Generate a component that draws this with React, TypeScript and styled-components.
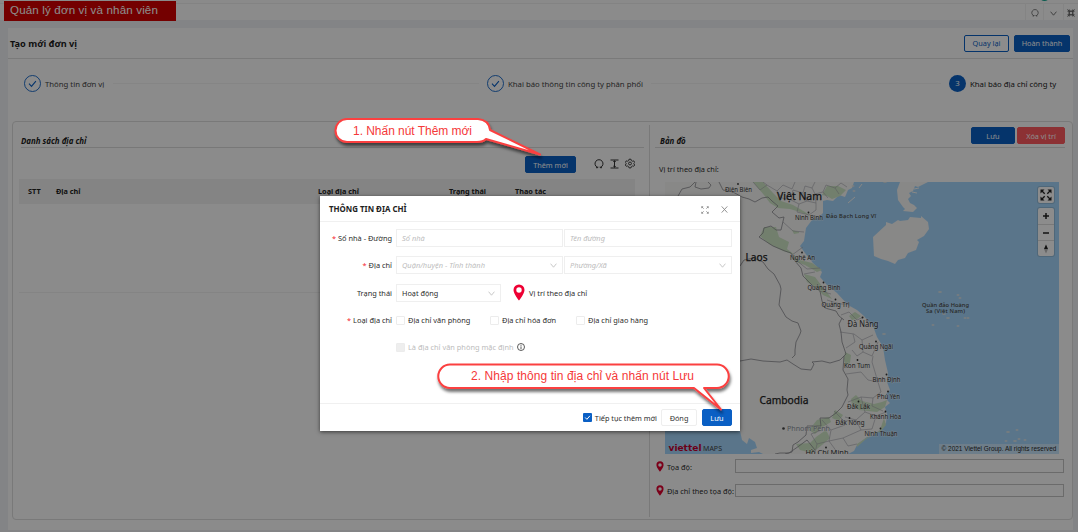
import React from "react";
import styled, { createGlobalStyle, css } from "styled-components";

const Global = createGlobalStyle`
  *, *::before, *::after { box-sizing: border-box; }
  html, body { margin: 0; padding: 0; }
  body { width: 1078px; height: 532px; overflow: hidden; font-family: "Noto Sans", "Open Sans", sans-serif; font-size: 7.4px; line-height: 10px; color: #2c2c2c; }
`;

const BLUE = "#0a5fc4";

const Screen = styled.div`
  position: relative;
  width: 1078px;
  height: 532px;
  overflow: hidden;
  background: #eff1f4;
  display: flex;
  flex-direction: column;
`;

const TopBar = styled.header`
  position: relative;
  height: 20px;
  flex: none;
  background: #fdfdfd;
  border-top: 3px solid #fbfbfb;
  display: flex;
  justify-content: space-between;
  box-shadow: inset 0 1px 0 #efefef;
`;

const Banner = styled.h1`
  position: absolute;
  left: 4px;
  top: -2px;
  width: 172px;
  height: 20px;
  margin: 0;
  padding-left: 6px;
  background: #d40000;
  color: #fff;
  font: 400 11.6px/18px "Liberation Sans", Arial, sans-serif;
  white-space: nowrap;
  letter-spacing: 0.14px;
`;

const Avatar = styled.span`
  position: absolute;
  left: 1039px;
  top: -13px;
  width: 11px;
  height: 11px;
  border-radius: 50%;
  background: #10a78f;
`;

const TabTools = styled.div`
  margin-left: auto;
  display: flex;
  height: 17px;
`;

const TabTool = styled.span<{ $w: number }>`
  width: ${(p) => p.$w}px;
  border-left: 1px solid #f0f0f0;
  display: flex;
  align-items: center;
  justify-content: center;
  padding-top: 3px;
  color: #666;
  svg { display: block; flex: none; }
`;

const Page = styled.main`
  margin: 8px 5px 0 8px;
  height: 502px;
  background: #fefefe;
  display: flex;
  flex-direction: column;
`;

const PageHeader = styled.div`
  height: 31px;
  flex: none;
  border-bottom: 1px solid #dfdfdf;
  padding: 0 3px 0 2px;
  display: flex;
  align-items: center;
  gap: 5px;
`;

const PageTitle = styled.h2`
  margin: 2px auto 0 0;
  font-size: 9.2px;
  line-height: 12px;
  font-weight: 700;
  color: #1c1c1c;
`;

const Button = styled.button<{ $w: number; $kind?: "primary" | "outline" | "danger" | "plain" }>`
  width: ${(p) => p.$w}px;
  height: 17px;
  padding: 0;
  border-radius: 2px;
  font: 400 7.3px/10px "Noto Sans", sans-serif;
  white-space: nowrap;
  flex: none;
  ${(p) =>
    p.$kind === "outline"
      ? css`background: #fff; color: ${BLUE}; border: 1px solid ${BLUE};`
      : p.$kind === "danger"
      ? css`background: #ff5a5f; color: #fff; border: 1px solid #ff5a5f;`
      : p.$kind === "plain"
      ? css`background: #fff; color: #333; border: 1px solid #eee;`
      : css`background: ${BLUE}; color: #fff; border: 1px solid ${BLUE};`}
`;

const Steps = styled.div`
  height: 62px;
  flex: none;
  padding: 16px 17px 0 16px;
  display: flex;
  align-items: flex-start;
`;

const Step = styled.div`
  display: flex;
  align-items: center;
  gap: 4px;
  height: 17px;
  flex: none;
  white-space: nowrap;
  color: #444;
  svg { display: block; flex: none; }
`;

const StepText = styled.span<{ $w: number; $dark?: boolean }>`
  width: ${(p) => p.$w}px;
  padding-top: 1px;
  font-size: 7.75px;
  color: ${(p) => (p.$dark ? "#222" : "#444")};
`;

const StepDot = styled.span`
  width: 17px;
  height: 17px;
  border-radius: 50%;
  background: ${BLUE};
  color: #fff;
  text-align: center;
  font-size: 7.8px;
  line-height: 17px;
`;

const StepLine = styled.i<{ $w?: number }>`
  flex: ${(p) => (p.$w ? `0 0 ${p.$w}px` : "1")};
  height: 1px;
  margin: 8px 8px 0 8px;
  background: #f2f2f2;
`;

const Box = styled.section`
  margin: 0 0 0 4px;
  height: 399px;
  border: 1px solid #dcdcdc;
  border-radius: 4px;
  display: flex;
`;

const ListPane = styled.div`
  width: 637px;
  margin: 3px 0 2px;
  padding: 0 5px 0 6px;
  border-right: 1px solid #dcdcdc;
`;

const MapPane = styled.div`
  flex: 1;
  padding: 3px 7px 0 5px;
`;

const PaneHead = styled.div<{ $inset: number }>`
  height: 23px;
  margin-left: ${(p) => p.$inset}px;
  border-bottom: 1px solid #dadada;
  display: flex;
  align-items: flex-start;
  gap: 2px;
  padding-top: 2px;
`;

const PaneTitle = styled.h3<{ $x?: number }>`
  margin: 9px auto 0 ${(p) => p.$x ?? 0}px;
  font-size: 7.9px;
  line-height: 10px;
  font-style: italic;
  font-weight: 700;
  color: #1c1c1c;
`;

const Toolbar = styled.div`
  height: 31px;
  padding: 8px 8px 0 0;
  display: flex;
  justify-content: flex-end;
  align-items: flex-start;
`;

const ToolIcons = styled.div`
  margin: -1px 1px 0 15px;
  height: 17px;
  padding-left: 3px;
  display: flex;
  align-items: center;
  gap: 5px;
  color: #333;
  svg { display: block; }
`;

const TableHead = styled.div`
  width: 616px;
  height: 25px;
  background: #f0f0f0;
  display: flex;
  align-items: center;
  font-weight: 700;
  font-size: 7.3px;
  color: #222;
  padding: 0 0 1px 9px;
`;

const Cell = styled.span<{ $w: number }>`
  width: ${(p) => p.$w}px;
`;

const TableBody = styled.div`
  width: 616px;
  height: 89px;
  border-bottom: 1px solid #f0f0f0;
`;

const MapLabel = styled.div`
  margin: 16px 0 8px 4px;
  font-size: 7.35px;
  line-height: 10px;
`;

const MapFrame = styled.div`
  position: relative;
  margin-left: 10px;
  width: 394px;
  height: 272px;
  svg { display: block; }
`;

const MapButtons = styled.div<{ $top: number }>`
  position: absolute;
  left: 373px;
  top: ${(p) => p.$top}px;
  width: 16px;
  background: #fff;
  border-radius: 2px;
  box-shadow: 0 0 0 1px rgba(0, 0, 0, 0.12);
`;

const MapButton = styled.span`
  height: 16px;
  display: flex;
  align-items: center;
  justify-content: center;
  & + & { border-top: 1px solid #ddd; }
`;

const Copyright = styled.div`
  position: absolute;
  right: 0;
  bottom: 0;
  width: 120px;
  height: 10px;
  background: rgba(255, 255, 255, 0.4);
  color: #2a2a2a;
  text-align: center;
  font: 400 6.45px/10px "Liberation Sans", Arial, sans-serif;
  white-space: nowrap;
`;

const CoordRow = styled.label<{ $top: number; $h: number }>`
  margin-top: ${(p) => p.$top}px;
  padding-left: 1px;
  height: ${(p) => p.$h}px;
  display: flex;
  align-items: center;
  svg { display: block; flex: none; }
  span { width: 71px; padding: 1px 0 0 3px; white-space: nowrap; font-size: 7.35px; }
  input { width: 329px; flex: none; height: 100%; border: 1px solid #c4c4c4; background: transparent; padding: 0; border-radius: 0; }
`;

const Mask = styled.div`
  position: absolute;
  inset: 0;
  background: rgba(0, 0, 0, 0.45);
`;

const Modal = styled.div`
  position: absolute;
  left: 320px;
  top: 196px;
  width: 420px;
  height: 235px;
  background: #fff;
  box-shadow: 0 1px 4px rgba(0, 0, 0, 0.6);
  display: flex;
  flex-direction: column;
`;

const ModalHead = styled.div`
  height: 26px;
  flex: none;
  border-bottom: 1px solid #f0f0f0;
  display: flex;
  align-items: center;
  gap: 12px;
  padding: 2px 12px 0 9px;
  color: #888;
  h4 { margin: -1px auto 0 0; font-size: 7.9px; line-height: 10px; font-weight: 700; color: #222; }
  svg { display: block; }
`;

const Form = styled.div`
  flex: 1;
  padding: 7px 8px 0 0;
`;

const Row = styled.div<{ $h: number }>`
  height: ${(p) => p.$h}px;
  display: flex;
  align-items: flex-start;
`;

const Label = styled.span`
  width: 76px;
  flex: none;
  padding: 4px 4px 0 0;
  text-align: right;
  white-space: nowrap;
  em { color: #f5222d; font-style: normal; margin-right: 2px; }
`;

const Field = styled.div<{ $w: number; $value?: boolean }>`
  width: ${(p) => p.$w}px;
  flex: none;
  height: 18px;
  border: 1px solid #efefef;
  padding: 0 5px;
  display: flex;
  align-items: center;
  justify-content: space-between;
  font-style: ${(p) => (p.$value ? "normal" : "italic")};
  color: ${(p) => (p.$value ? "#2c2c2c" : "#bdbdbd")};
  font-size: ${(p) => (p.$value ? 7.3 : 7.45)}px;
  & + & { margin-left: 1px; }
  svg { display: block; }
`;

const Located = styled.div`
  display: flex;
  align-items: center;
  gap: 4px;
  margin-left: 12px;
  height: 17px;
  white-space: nowrap;
  svg { display: block; }
`;

const Check = styled.span<{ $w?: number; $off?: boolean }>`
  width: ${(p) => (p.$w ? p.$w + "px" : "auto")};
  height: 18px;
  display: flex;
  align-items: center;
  gap: 3px;
  white-space: nowrap;
  color: ${(p) => (p.$off ? "#bcbcbc" : "#2c2c2c")};
  svg { display: block; color: #333; }
`;

const Tick = styled.i<{ $off?: boolean }>`
  width: 9px;
  height: 9px;
  flex: none;
  border: 1px solid #ececec;
  border-radius: 1px;
  background: ${(p) => (p.$off ? "#eee" : "#fff")};
`;

const ModalFoot = styled.div`
  height: 28px;
  flex: none;
  border-top: 1px solid #f0f0f0;
  display: flex;
  align-items: center;
  justify-content: flex-end;
  gap: 4px;
  padding-right: 8px;
  font-size: 7.3px;
  button:last-child { margin-left: 1px; }
`;

const Callouts = styled.svg`
  position: absolute;
  inset: 0;
`;

const Pin = ({ w, h, color }: { w: number; h: number; color: string }) => (
  <svg width={w} height={h} viewBox="0 0 12 17">
    <path fillRule="evenodd" fill={color} d="M6 .5A5.500 5.500 0 0 0 .5 6c0 4 5.500 10.500 5.500 10.500S11.500 10 11.500 6A5.500 5.500 0 0 0 6 .5ZM6 3.300a2.700 2.700 0 1 1 0 5.400 2.700 2.700 0 0 1 0-5.400Z" />
  </svg>
);

const Chevron = ({ c = "#bbb" }: { c?: string }) => (
  <svg width="7" height="5" viewBox="0 0 7 5">
    <path d="M.6.7 3.500 4.200 6.400.7" fill="none" stroke={c} strokeWidth=".8" />
  </svg>
);

const Reload = ({ s }: { s: number }) => (
  <svg width={s} height={s} viewBox="0 0 10 10">
    <path d="M2 8.700H3.800V7.600M3.500 8.400A4 4 0 1 1 6.500 8.400M6.200 7.600V8.700H8" fill="none" stroke="currentColor" strokeWidth="1" />
  </svg>
);

const StepCheck = () => (
  <svg width="17" height="17" viewBox="0 0 17 17">
    <circle cx="8.500" cy="8.500" r="8" fill="none" stroke={BLUE} strokeWidth=".9" />
    <path d="m5 8.600 2.500 2.700 4.400-5.200" fill="none" stroke={BLUE} strokeWidth="1.100" />
  </svg>
);

const Gear = () => (
  <svg width="10" height="11" viewBox="0 0 11 11" fill="none" stroke="currentColor" strokeWidth="1">
    <path d="M4.400.8h2.200l.4 1.500 1.300.7 1.400-.4 1 1.900-1 1v0l1 1.900-1 1.100-1.400-.3L7 9l-.4 1.300H4.400L4 9l-1.300-.8-1.400.3-1-1.100 1-1.900-1-1 1-1.900 1.400.4L4 2.300Z" />
    <circle cx="5.500" cy="5.500" r="1.600" />
  </svg>
);

type Place = [string, number, number, number, number, number, number];
/* name, centre x, baseline y, font size, width, marker x, marker y */
const places: Place[] = [
  ["Điện Biên", 73.500, 9.500, 6.800, 27, 73, 2],
  ["Ninh Bình", 144, 38, 6.800, 28, 143.500, 30.500],
  ["Nghệ An", 137.500, 78, 6.800, 25, 137, 70.500],
  ["Quảng Bình", 159, 108, 6.800, 33, 158.500, 100.500],
  ["Quảng Trị", 170.500, 124.500, 6.800, 28, 170.500, 117.500],
  ["Đà Nẵng", 198, 145, 8.200, 31, 197.500, 135.500],
  ["Quảng Ngãi", 211, 166.500, 6.800, 34, 211, 159.500],
  ["Kon Tum", 192, 185.500, 6.800, 26, 192.500, 178],
  ["Bình Định", 221.500, 200, 6.800, 28, 221.500, 192.500],
  ["Phú Yên", 223.500, 216.500, 6.800, 23, 223, 209.500],
  ["Đắk Lắk", 193.500, 226.500, 6.800, 23, 193.500, 219.500],
  ["Khánh Hòa", 220.500, 237, 6.800, 31, 220.500, 229.500],
  ["Đắk Nông", 185, 243, 6.800, 29, 184.500, 236],
  ["Ninh Thuận", 216, 254, 6.800, 33, 215.500, 246.500],
];

const islands = [
  [275, 110], [293, 113], [295, 116], [279, 132], [303, 136], [300, 136], [283, 136], [268, 143], [293, 144], [343, 250],
  [352, 248], [341, 259], [350, 259], [354, 257], [360, 258], [219, 152], [189, 9], [188, 4], [220, 0],
];

const MapArt = () => (
  <svg width="394" height="272" viewBox="0 0 394 272" fontFamily='"Noto Sans", sans-serif'>
    <rect width="394" height="272" fill="#a5d6fb" />
    <path
      fill="#f7f7f6"
      d="M0 0H189L187 6 183 8 180 15 174 13 168 19 162 18 158 19 158 31 153 36 147 38 141 46 139 59 135 64 140 71 148 81 152 85 157 90 155 95 162 103 172 111 183 123 192 128 199 134 203 139 208 144 212 155 218 165 220 178 223 191 222 200 225 208 221 212 222 218 225 221 220 225 222 232 221 241 215 248 207 254 202 255 192 263 189 269 183 272H98L94 270 86 271 86 268 92 266 90 260 84 256 82 262 77 258 75 249H0Z"
    />
    <path
      fill="#f7f7f6"
      d="M208 55 221 43 221 40 227 42 233 38 235 39 243 38 245 35 256 36 256 34 263 40 264 47 259 54 252 58 254 60 251 68 243 71 240 76 233 78 230 82 223 79 216 77 209 74ZM235 0 232 8 233 18 238 25 240 27 238 29 248 30 252 26 249 23 245 21 243 17 246 14 244 11 248 9 250 4 253 5 257 3 263 0Z"
    />
    <path fill="none" stroke="#f7f7f6" d="M247 10 252 11M249 7 254 6M183 21 190 15M194 6 197 2" />
    {islands.map(([x, y], i) => (
      <ellipse key={i} cx={x} cy={y} rx={i % 3 ? 1.500 : 2} ry=".8" fill="#e9e8e2" />
    ))}
    <g fill="#cfe8c6">
      <path d="M88 0h10l10 11 8 8 12 4 12 7 5 4-10-4-10-3-12-1-8-5-6-8Z" />
      <path d="m95 54 4-9 12 0 3 10 10 5-2 7 8 6-12-4-14-7Z" />
      <path d="m127 48 7 2 0 1-5 1ZM127 73l8 5 12 3 10 7-5 2-12-7-9-3ZM139 92l11 3 6 8 5 6 6 8-9-4-8-8-8-5Z" />
      <path d="M184 134l6-4 6 4-4 3-5 1ZM180 170l6 3-1 8-5 3-1-7ZM186 217l5-4 6 6 12 3 8-2 5-2-2 7-8 5-18-2-7-5ZM170 228l8 5-4 6-7-3ZM131 262l14-1 6-6 10-7 4 8-8 7-10 8-12-3ZM192 262l9-6 8-3 6-5 4-12 2 7-5 6-15 8-9 8Z" />
      <path d="M162 4l-5 9 5 1 5 3 8-3 6-6-8-4ZM152 238l12-3 2 5-10 6-6 6-6-4Z" />
    </g>
    <g fill="none" stroke="#a6a6ac" strokeWidth=".6">
      <path d="M88 0 95 8 102 3 112 9 118 3 127 7 130 0M102 3 98 0M112 9 117 16 126 18 128 8 138 11 140 4 147 6 150 0M126 18 134 22 142 19 138 11M142 19 151 21 150 12 147 6M134 22 132 30 144 33 151 28 151 21M150 12 158 10 163 16M158 10 161 3 170 6 174 12M170 6 176 1 182 5" />
      <path d="M118 40 128 49 139 50M127 73 138 65M131 78 142 87 155 86M139 92 150 90M155 109 166 112M162 118 175 122 183 122M176 133 184 130 192 138 199 135M175 150 189 152 197 158 208 153M188 152 190 160 181 166M197 158 198 170 207 174 213 160M198 170 192 174 187 168M181 192 196 190 203 198 213 200 207 180 208 174M213 200 216 210 208 216 207 224 218 229M183 220 196 215 208 216M196 215 200 230 191 238 180 235M200 230 211 234 221 230M191 238 196 248 207 247 211 234M169 229 179 239 191 238M157 238 166 248 180 243M166 248 164 259 178 256 196 248M164 259 152 262 146 252 157 248M178 256 183 264 192 262M152 262 150 271M164 259 172 270" />
    </g>
    <g fill="none" stroke="#8b8b91" strokeWidth=".8" strokeLinejoin="round">
      <path d="M13 14 17 7 25 5 30 0M31 0 30 5 36 7 44 6 46 3 43 0M54 0 58 8 68 10 77 15 84 17 90 20 97 16 103 15 107 19 113 24 107 30 114 36 119 35 116 48 111 48 106 44 99 46 98 51 94 55 108 64 120 69 126 71 130 79 136 86 138 94 148 104 155 109 157 119 160 126 171 129 174 134 179 138" />
      <path d="M75 84 79 78 89 76 98 80 103 87 109 91 116 105 114 122 121 135 125 139 134 140 138 145 134 150 135 162" opacity="0" />
      <path d="M75 84 79 78 89 76 98 80 103 87 109 92 115 103 116 107 114 123 121 135 127 139 133 141 136 149 135 152 131 160 130 168 130 173 127 176" />
      <path d="M0 186 75 179 86 177 98 179 115 180 122 178 128 182 136 187 146 188 149 182 147 180 157 179 165 181 175 178 181 172 177 160 176 150 174 142 177 136M179 174 178 188 183 197 182 208 183 213 177 225 171 231 164 236 155 236 156 244 146 244 142 244 141 253 133 260 128 263 127 270 120 272" />
      <path d="M110 272 115 271 124 271 134 264 142 258 150 268" />
    </g>
    <g textAnchor="middle" fill="#333" stroke="#fff" strokeOpacity=".5" strokeWidth="1" paintOrder="stroke">
      {places.map(([n, x, y, s, w]) => (
        <text key={n} x={x} y={y} fontSize={s} textLength={w} lengthAdjust="spacingAndGlyphs">{n}</text>
      ))}
      <text x="162" y="273" fontSize="7.500" textLength="43" lengthAdjust="spacingAndGlyphs">Hồ Chí Minh</text>
      <text x="143.500" y="249" fontSize="7" fill="#8a9299" textLength="43" lengthAdjust="spacingAndGlyphs">Phnom Penh</text>
    </g>
    <g textAnchor="middle" fill="#222" stroke="#222" strokeWidth=".25" fontSize="10.800">
      <text x="134.500" y="18" textLength="45" lengthAdjust="spacingAndGlyphs">Việt Nam</text>
      <text x="91.500" y="79" textLength="22" lengthAdjust="spacingAndGlyphs">Laos</text>
      <text x="119" y="222" textLength="49" lengthAdjust="spacingAndGlyphs">Cambodia</text>
    </g>
    <g textAnchor="middle" fill="#464340" fontSize="5.700" fontWeight="500">
      <text x="186" y="36" textLength="50">Đảo Bạch Long Vĩ</text>
      <text x="280.500" y="124.500" textLength="47">Quần đảo Hoàng</text>
      <text x="280.500" y="130.500" textLength="39">Sa (Việt Nam)</text>
    </g>
    {places.map(([n, , , , , x, y]) => (
      <circle key={n} cx={x} cy={y} r=".9" fill="#333" />
    ))}
    <circle cx="118.500" cy="246.500" r="1.300" fill="#444" />
    <circle cx="161" cy="265.500" r=".9" fill="#333" />
    <text x="3.500" y="268.500" fontFamily='"DejaVu Sans", sans-serif' fontWeight="700" fontSize="8.500" fill="#c4002f" textLength="33" lengthAdjust="spacingAndGlyphs">viettel</text>
    <text x="38" y="268.500" fontSize="6.800" fill="#444" textLength="19" lengthAdjust="spacingAndGlyphs">MAPS</text>
  </svg>
);

const Req = () => <em>*</em>;

export default function App() {
  return (
    <Screen>
      <Global />
      <TopBar>
        <Avatar />
        <Banner>Quản lý đơn vị và nhân viên</Banner>
        <TabTools>
          <TabTool $w={18}><Reload s={8} /></TabTool>
          <TabTool $w={20}><Chevron c="#555" /></TabTool>
          <TabTool $w={15}>
            <svg width="8" height="8" viewBox="0 0 9 9" fill="none" stroke="#666" strokeWidth="1">
              <path d="M2.500 2.500h4v4h-4ZM.5.5l2 2M8.500.5l-2 2M.5 8.500l2-2M8.500 8.500l-2-2M2.500.5v8M6.500.5v8M.5 2.500h8M.5 6.500h8" />
            </svg>
          </TabTool>
        </TabTools>
      </TopBar>

      <Page>
        <PageHeader>
          <PageTitle>Tạo mới đơn vị</PageTitle>
          <Button $w={45} $kind="outline">Quay lại</Button>
          <Button $w={56}>Hoàn thành</Button>
        </PageHeader>

        <Steps>
          <Step><StepCheck /><StepText $w={60}>Thông tin đơn vị</StepText></Step>
          <StepLine $w={366} />
          <Step><StepCheck /><StepText $w={135}>Khai báo thông tin công ty phân phối</StepText></Step>
          <StepLine />
          <Step><StepDot>3</StepDot><StepText $w={86} $dark>Khai báo địa chỉ công ty</StepText></Step>
        </Steps>

        <Box>
          <ListPane>
            <PaneHead $inset={2}><PaneTitle>Danh sách địa chỉ</PaneTitle></PaneHead>
            <Toolbar>
              <Button $w={51}>Thêm mới</Button>
              <ToolIcons>
                <Reload s={10} />
                <svg width="11" height="10" viewBox="0 0 11 10" fill="none" stroke="currentColor" strokeWidth="1">
                  <path d="M1.500 1h8M1.500 9h8M5.500 1.500v7M4.300 3 5.500 1.800 6.700 3M4.300 7l1.200 1.200L6.700 7" />
                </svg>
                <Gear />
              </ToolIcons>
            </Toolbar>
            <TableHead>
              <Cell $w={28}>STT</Cell>
              <Cell $w={262}>Địa chỉ</Cell>
              <Cell $w={131}>Loại địa chỉ</Cell>
              <Cell $w={66}>Trạng thái</Cell>
              <Cell $w={60}>Thao tác</Cell>
            </TableHead>
            <TableBody />
          </ListPane>

          <MapPane>
            <PaneHead $inset={0}>
              <PaneTitle $x={5}>Bản đồ</PaneTitle>
              <Button $w={44}>Lưu</Button>
              <Button $w={48} $kind="danger">Xóa vị trí</Button>
            </PaneHead>
            <MapLabel>Vị trí theo địa chỉ:</MapLabel>
            <MapFrame>
              <MapArt />
              <MapButtons $top={5}>
                <MapButton>
                  <svg width="12" height="12" viewBox="0 0 12 12" fill="#222" stroke="#222" strokeWidth="1.300">
                    <path strokeWidth="0" d="M.5.5h4l-4 4ZM11.500.5h-4l4 4ZM.5 11.500v-4l4 4ZM11.500 11.500h-4l4-4Z" />
                    <path d="M2 2l2.700 2.700M10 2 7.300 4.700M2 10l2.700-2.700M10 10 7.300 7.300" />
                  </svg>
                </MapButton>
              </MapButtons>
              <MapButtons $top={26}>
                <MapButton><svg width="8" height="8"><path d="M4 1v6M1 4h6" stroke="#222" strokeWidth="1.500" /></svg></MapButton>
                <MapButton><svg width="8" height="8"><path d="M1 4h6" stroke="#222" strokeWidth="1.500" /></svg></MapButton>
                <MapButton>
                  <svg width="6" height="10"><path d="m1 5 2-4.500L5 5Z" fill="#222" /><path d="m1 5 2 4.500L5 5Z" fill="#bbb" /></svg>
                </MapButton>
              </MapButtons>
              <Copyright>© 2021 Viettel Group. All rights reserved</Copyright>
            </MapFrame>
            <CoordRow $top={5} $h={14}><Pin w={8} h={11} color="#e0002f" /><span>Tọa độ:</span><input /></CoordRow>
            <CoordRow $top={11} $h={13}><Pin w={8} h={11} color="#e0002f" /><span>Địa chỉ theo tọa độ:</span><input /></CoordRow>
          </MapPane>
        </Box>
      </Page>

      <Mask />

      <Modal>
        <ModalHead>
          <h4>THÔNG TIN ĐỊA CHỈ</h4>
          <svg width="8" height="8" viewBox="0 0 8 8" fill="none" stroke="currentColor" strokeWidth=".8">
            <path d="M.7.7l2 2M7.300.7l-2 2M.7 7.300l2-2M7.300 7.300l-2-2M.7 2.200V.7H2.200M5.800.7H7.300V2.200M.7 5.800V7.300H2.200M5.800 7.300H7.300V5.800" />
          </svg>
          <svg width="7" height="7" viewBox="0 0 7 7"><path d="M.7.4 6.300 6.600M6.300.4.7 6.600" stroke="currentColor" strokeWidth=".9" /></svg>
        </ModalHead>
        <Form>
          <Row $h={27}>
            <Label><Req />Số nhà - Đường</Label>
            <Field $w={167}>Số nhà</Field>
            <Field $w={168}>Tên đường</Field>
          </Row>
          <Row $h={28}>
            <Label><Req />Địa chỉ</Label>
            <Field $w={167}>Quận/huyện - Tỉnh thành<Chevron /></Field>
            <Field $w={168}>Phường/Xã<Chevron /></Field>
          </Row>
          <Row $h={27}>
            <Label>Trạng thái</Label>
            <Field $w={105} $value>Hoạt động<Chevron /></Field>
            <Located><Pin w={12} h={17} color="#ee0033" />Vị trí theo địa chỉ</Located>
          </Row>
          <Row $h={27}>
            <Label><Req />Loại địa chỉ</Label>
            <Check $w={94}><Tick />Địa chỉ văn phòng</Check>
            <Check $w={86}><Tick />Địa chỉ hóa đơn</Check>
            <Check><Tick />Địa chỉ giao hàng</Check>
          </Row>
          <Row $h={20}>
            <Label />
            <Check $off>
              <Tick $off />Là địa chỉ văn phòng mặc định
              <svg width="8" height="8" viewBox="0 0 8 8" fill="none" stroke="currentColor" strokeWidth=".8">
                <circle cx="4" cy="4" r="3.500" /><path d="M4 1.800v1M4 3.400v2.800" />
              </svg>
            </Check>
          </Row>
        </Form>
        <ModalFoot>
          <Check>
            <svg width="9" height="9" viewBox="0 0 9 9"><rect width="9" height="9" rx="1" fill={BLUE} /><path d="m2.200 4.500 1.700 1.800 3-3.500" fill="none" stroke="#fff" /></svg>
            <span>Tiếp tục thêm mới</span>
          </Check>
          <Button $w={36} $kind="plain">Đóng</Button>
          <Button $w={30}>Lưu</Button>
        </ModalFoot>
      </Modal>

      <Callouts width="1078" height="532" viewBox="0 0 1078 532">
        <defs>
          <filter id="drop" x="-10%" y="-30%" width="120%" height="180%">
            <feDropShadow dx="1" dy="3" stdDeviation="1.500" floodColor="#000" floodOpacity=".55" />
          </filter>
        </defs>
        <g fill="#fff" stroke="#fb4141" strokeWidth="2" strokeLinejoin="round" filter="url(#drop)">
          <path d="M347 119H478Q489 120 490 130L540 154.500 486 139Q483 142 477 142H347A11.500 11.500 0 0 1 347 119Z" />
          <path d="M450 364.500H717A11.700 11.700 0 0 1 717 388H704L721 409.500 694 388H450A11.700 11.700 0 0 1 450 364.500Z" />
        </g>
        <g fill="#f53838" fontFamily='"Liberation Sans", Arial, sans-serif' fontSize="12">
          <text x="353" y="135" textLength="119">1. Nhấn nút Thêm mới</text>
          <text x="471" y="380" textLength="223">2. Nhập thông tin địa chỉ và nhấn nút Lưu</text>
        </g>
      </Callouts>
    </Screen>
  );
}
